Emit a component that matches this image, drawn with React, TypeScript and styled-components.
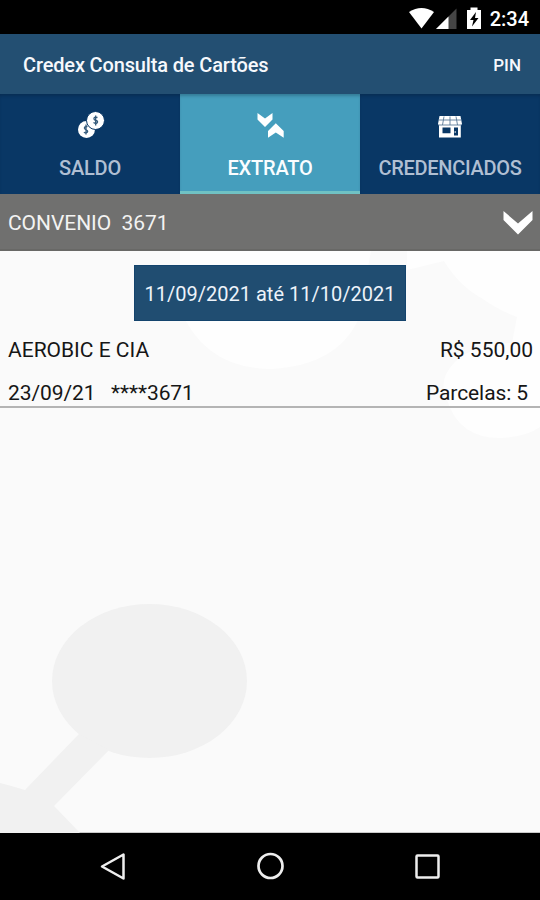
import React from "react";
import styled, { createGlobalStyle } from "styled-components";

const GlobalStyle = createGlobalStyle`
  * { box-sizing: border-box; }
  body { margin: 0; background: #fafafa; font-family: Roboto, "Liberation Sans", sans-serif; }
`;

const Screen = styled.div`
  width: 540px;
  height: 900px;
  display: flex;
  flex-direction: column;
  overflow: hidden;
`;

const StatusBar = styled.div`
  height: 34px;
  flex: none;
  background: #000;
  color: #fff;
  display: flex;
  align-items: center;
  justify-content: flex-end;
  padding: 3px 11px 0 0;
`;

const Clock = styled.span`
  font-size: 20px;
  font-weight: 500;
  line-height: 24px;
  margin-left: 6px;
`;

const AppBar = styled.header`
  height: 60px;
  flex: none;
  background: #234f72;
  color: #f6f8fc;
  display: flex;
  align-items: center;
  justify-content: space-between;
  padding: 1px 19px 0 23px;
`;

const Title = styled.h1`
  margin: 0;
  font-size: 20px;
  font-weight: 500;
  letter-spacing: -0.15px;
`;

const PinButton = styled.button`
  border: 0;
  padding: 0;
  background: none;
  color: inherit;
  font: 500 17px Roboto, sans-serif;
`;

const Tabs = styled.nav`
  height: 100px;
  flex: none;
  display: grid;
  grid-template-columns: repeat(3, 1fr);
`;

const Tab = styled.button<{ $active?: boolean }>`
  border: 0;
  border-bottom: ${(p) => (p.$active ? "3px solid #70c2c4" : "0")};
  padding: 14px 0 0;
  background: ${(p) => (p.$active ? "#459ebd" : "#093765")};
  box-shadow: inset 0 3px 3px -1px rgba(0, 20, 40, 0.25);
  color: ${(p) => (p.$active ? "#fafdff" : "#b0bfd3")};
  font: 500 20px Roboto, sans-serif;
  display: flex;
  flex-direction: column;
  align-items: center;
  justify-content: flex-start;
  gap: 15px;
`;

const TabLabel = styled.span<{ $spacing: number }>`
  line-height: 26px;
  white-space: nowrap;
  letter-spacing: ${(p) => p.$spacing}px;
`;

const AccountBar = styled.div`
  height: 57px;
  flex: none;
  background: #70706f;
  border-bottom: 2px solid #686866;
  color: #f3f3f2;
  display: flex;
  align-items: center;
  justify-content: space-between;
  padding: 2px 7px 0 8px;
  font-size: 21px;
  white-space: pre;
`;

const Content = styled.main`
  flex: 1;
  min-height: 0;
  position: relative;
  isolation: isolate;
  background: #fafafa;
  color: #161616;
  border-bottom: 1px solid #c9c9c9;
  display: flex;
  flex-direction: column;
`;

const Backdrop = styled.svg`
  position: absolute;
  inset: 0;
  z-index: -1;
`;

const Period = styled.button`
  align-self: center;
  margin-top: 14px;
  width: 272px;
  height: 56px;
  padding: 2px 0 0;
  border: 1px solid #14446d;
  background: #204d71;
  color: #edf3fa;
  font: 400 20px Roboto, sans-serif;
  white-space: nowrap;
`;

const Entry = styled.section`
  height: 87px;
  border-bottom: 2px solid #b4b4b4;
  padding: 15px 7px 0 8px;
  display: flex;
  flex-direction: column;
  gap: 15px;
`;

const EntryLine = styled.div<{ $inset?: number }>`
  height: 28px;
  line-height: 28px;
  font-size: 21px;
  display: flex;
  justify-content: space-between;
  padding-right: ${(p) => p.$inset ?? 0}px;
  white-space: pre;
`;

const Fit = styled.span<{ $spacing?: number }>`
  letter-spacing: ${(p) => p.$spacing ?? 0}px;
`;

const NavBar = styled.footer`
  height: 67px;
  flex: none;
  background: #000;
  display: flex;
  align-items: center;
  justify-content: space-between;
  padding: 0 98px 1px 99px;
`;

const StatusIcons = () => (
  <svg width="76" height="30" viewBox="407 2 76 30" fill="#fff">
    <path d="M408 10Q420.500 2 433 10L420.500 26.500Z" />
    <path d="M435 27L455.500 6.500V27Z" fill="#454545" />
    <path d="M435 27L447.500 14.500V27Z" />
    <path d="M466 8H469.500V5.500H476.500V8H480V27H466Z" />
    <path d="M475 10L469 18H472.500L471 24.500L477.500 16H474Z" fill="#000" />
  </svg>
);

const CoinsIcon = () => (
  <svg width="32" height="32" viewBox="0 0 32 32">
    <circle cx="12.500" cy="21.500" r="8.500" fill="#fff" />
    <circle cx="21.500" cy="12.500" r="9" fill="#fff" stroke="#093765" />
    <g fill="none" stroke="#315879" strokeWidth="1.300">
      <path d="M23.500 9.500Q19.500 8.500 20 11Q20 12 22 12.500Q24.500 13 23 15Q21.500 16 19.500 14.500M21.700 7.500V17.500" />
      <path d="M13.500 18.500Q10 18 10.500 20.500Q11 21.500 12.500 22Q14.500 23 13 24.500Q11 25.500 10 24M12 16.500V26.500" />
    </g>
  </svg>
);

const ArrowsIcon = () => (
  <svg width="32" height="32" viewBox="0 0 32 32" fill="#fff">
    <path d="M3.500 5L11 10.500L18.500 5V11.500L11 19L3.500 11.500Z" />
    <path d="M14 23L21.800 15.300L29.700 23V29.700L21.800 24.500L14 29.700Z" />
  </svg>
);

const StoreIcon = () => (
  <svg width="32" height="32" viewBox="0 0 32 32">
    <path d="M5.500 8H26.500L28 16L26.800 17.500V29.500H5V17.500L4 16Z" fill="#fff" />
    <path d="M10 8.500L8.500 17M16 8.500V17M22 8.500L23.500 17M4.500 12H27.500M4.500 17H27.500" stroke="#5b7a98" strokeWidth=".9" />
    <path d="M8.500 19.500H16.500V25.300H8.500ZM20 19.500H24V27.500H20Z" fill="#093765" />
    <circle cx="21.200" cy="24" r=".8" fill="#fff" />
  </svg>
);

const ChevronIcon = () => (
  <svg width="30" height="25" viewBox="0 0 30 25">
    <path d="M.5 1L15 13.500L29.500 1V10L15 24.500L.5 10Z" fill="#fff" />
  </svg>
);

const Watermark = () => (
  <Backdrop width="540" height="582" viewBox="0 251 540 582">
    <path d="M180 251V309Q205 369 272 369Q337 365 358 320L371 251Z" fill="#fefefe" />
    <path d="M407 251V270L444 261Q459 286 483 299Q498 310 517 317L512 343Q474 344 455 362Q437 380 447 400Q459 438 500 438Q526 437 540 427V251Z" fill="#fefefe" />
    <ellipse cx="149.500" cy="681" rx="97.500" ry="77" fill="#f1f1f1" />
    <path d="M79 734L25 790Q12 786 0 783V833H80L54 806L109 750Z" fill="#f1f1f1" />
  </Backdrop>
);

export default function App() {
  return (
    <>
      <GlobalStyle />
      <Screen>
        <StatusBar>
          <StatusIcons />
          <Clock>2:34</Clock>
        </StatusBar>
        <AppBar>
          <Title>Credex Consulta de Cartões</Title>
          <PinButton>PIN</PinButton>
        </AppBar>
        <Tabs>
          <Tab><CoinsIcon /><TabLabel $spacing={-0.2}>SALDO</TabLabel></Tab>
          <Tab $active><ArrowsIcon /><TabLabel $spacing={-0.2}>EXTRATO</TabLabel></Tab>
          <Tab><StoreIcon /><TabLabel $spacing={-0.28}>CREDENCIADOS</TabLabel></Tab>
        </Tabs>
        <AccountBar>
          <Fit $spacing={-0.05}>CONVENIO  3671</Fit>
          <ChevronIcon />
        </AccountBar>
        <Content>
          <Watermark />
          <Period><Fit>11/09/2021 até 11/10/2021</Fit></Period>
          <Entry>
            <EntryLine><Fit>AEROBIC E CIA</Fit><Fit>R$ 550,00</Fit></EntryLine>
            <EntryLine $inset={5}><Fit $spacing={-0.07}>23/09/21   ****3671</Fit><Fit $spacing={-0.1}>Parcelas: 5</Fit></EntryLine>
          </Entry>
        </Content>
        <NavBar>
          <svg width="28" height="30" viewBox="0 0 28 30"><path d="M3 15.500L24.500 3.500V27.500Z" fill="none" stroke="#eee" strokeWidth="2.500" strokeLinejoin="round" /></svg>
          <svg width="30" height="30" viewBox="0 0 30 30"><circle cx="14.500" cy="15" r="12" fill="none" stroke="#eee" strokeWidth="2.700" /></svg>
          <svg width="28" height="30" viewBox="0 0 28 30"><rect x="2.500" y="4.500" width="22" height="22" rx="1" fill="none" stroke="#eee" strokeWidth="2.500" /></svg>
        </NavBar>
      </Screen>
    </>
  );
}
